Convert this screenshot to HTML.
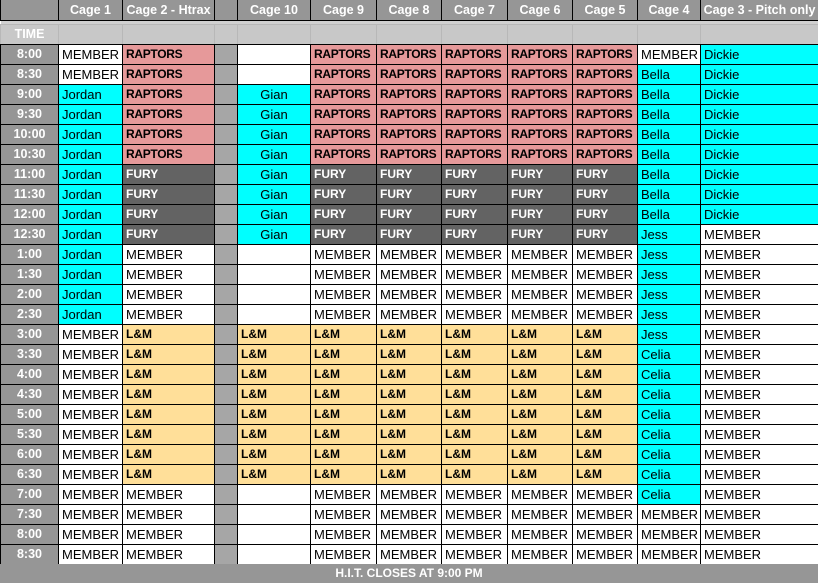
<!DOCTYPE html>
<html><head><meta charset="utf-8"><style>
body{margin:0;width:818px;height:583px;overflow:hidden;background:#fff;font-family:"Liberation Sans",Arial,sans-serif}
table{border-collapse:collapse;table-layout:fixed;width:818px;position:absolute;left:0;top:0}
td{border:1px solid #000;padding:0 0 0 3px;height:19px;font-size:13px;white-space:nowrap;overflow:hidden;line-height:19px;color:#000}
tr.h td{background:#969696;color:#fff;font-weight:bold;text-align:center;height:20px;padding:0;border-top:none;font-size:12.5px}
tr.sp td{height:3px;background:#d0d0d0;border:none;padding:0;line-height:3px}
tr.tm td{background:#c8c8c8;border-color:#b8b8b8;border-bottom:1px solid #000}
td.t{background:#969696;color:#fff;font-weight:bold;text-align:center;padding:0;font-size:12.5px}
.g{background:#a6a6a6}
.p{background:#e6999a;font-weight:bold;font-size:12px;letter-spacing:-0.3px}
.c{background:#00ffff}
.d{background:#636363;color:#fff;font-weight:bold;font-size:12px}
.o{background:#ffdf99;font-weight:bold;font-size:12px}
.m{text-align:center;padding:0}
.f{position:absolute;left:0;top:564px;width:818px;height:19px;background:#969696;color:#fff;font-weight:bold;font-size:12px;text-align:center;line-height:19px}
</style></head><body>
<table>
<colgroup><col style="width:58px"><col style="width:64px"><col style="width:92px"><col style="width:23px"><col style="width:73px"><col style="width:66px"><col style="width:65px"><col style="width:66px"><col style="width:65px"><col style="width:65px"><col style="width:63px"><col style="width:118px"></colgroup>
<tr class="h"><td></td><td>Cage 1</td><td>Cage 2 - Htrax</td><td></td><td>Cage 10</td><td>Cage 9</td><td>Cage 8</td><td>Cage 7</td><td>Cage 6</td><td>Cage 5</td><td>Cage 4</td><td>Cage 3 - Pitch only</td></tr>
<tr class="sp"><td></td><td></td><td></td><td></td><td></td><td></td><td></td><td></td><td></td><td></td><td></td><td></td></tr>
<tr class="tm"><td class="t">TIME</td><td></td><td></td><td></td><td></td><td></td><td></td><td></td><td></td><td></td><td></td><td></td></tr>
<tr><td class="t">8:00</td><td>MEMBER</td><td class="p">RAPTORS</td><td class="g"></td><td></td><td class="p">RAPTORS</td><td class="p">RAPTORS</td><td class="p">RAPTORS</td><td class="p">RAPTORS</td><td class="p">RAPTORS</td><td>MEMBER</td><td class="c">Dickie</td></tr>
<tr><td class="t">8:30</td><td>MEMBER</td><td class="p">RAPTORS</td><td class="g"></td><td></td><td class="p">RAPTORS</td><td class="p">RAPTORS</td><td class="p">RAPTORS</td><td class="p">RAPTORS</td><td class="p">RAPTORS</td><td class="c">Bella</td><td class="c">Dickie</td></tr>
<tr><td class="t">9:00</td><td class="c">Jordan</td><td class="p">RAPTORS</td><td class="g"></td><td class="c m">Gian</td><td class="p">RAPTORS</td><td class="p">RAPTORS</td><td class="p">RAPTORS</td><td class="p">RAPTORS</td><td class="p">RAPTORS</td><td class="c">Bella</td><td class="c">Dickie</td></tr>
<tr><td class="t">9:30</td><td class="c">Jordan</td><td class="p">RAPTORS</td><td class="g"></td><td class="c m">Gian</td><td class="p">RAPTORS</td><td class="p">RAPTORS</td><td class="p">RAPTORS</td><td class="p">RAPTORS</td><td class="p">RAPTORS</td><td class="c">Bella</td><td class="c">Dickie</td></tr>
<tr><td class="t">10:00</td><td class="c">Jordan</td><td class="p">RAPTORS</td><td class="g"></td><td class="c m">Gian</td><td class="p">RAPTORS</td><td class="p">RAPTORS</td><td class="p">RAPTORS</td><td class="p">RAPTORS</td><td class="p">RAPTORS</td><td class="c">Bella</td><td class="c">Dickie</td></tr>
<tr><td class="t">10:30</td><td class="c">Jordan</td><td class="p">RAPTORS</td><td class="g"></td><td class="c m">Gian</td><td class="p">RAPTORS</td><td class="p">RAPTORS</td><td class="p">RAPTORS</td><td class="p">RAPTORS</td><td class="p">RAPTORS</td><td class="c">Bella</td><td class="c">Dickie</td></tr>
<tr><td class="t">11:00</td><td class="c">Jordan</td><td class="d">FURY</td><td class="g"></td><td class="c m">Gian</td><td class="d">FURY</td><td class="d">FURY</td><td class="d">FURY</td><td class="d">FURY</td><td class="d">FURY</td><td class="c">Bella</td><td class="c">Dickie</td></tr>
<tr><td class="t">11:30</td><td class="c">Jordan</td><td class="d">FURY</td><td class="g"></td><td class="c m">Gian</td><td class="d">FURY</td><td class="d">FURY</td><td class="d">FURY</td><td class="d">FURY</td><td class="d">FURY</td><td class="c">Bella</td><td class="c">Dickie</td></tr>
<tr><td class="t">12:00</td><td class="c">Jordan</td><td class="d">FURY</td><td class="g"></td><td class="c m">Gian</td><td class="d">FURY</td><td class="d">FURY</td><td class="d">FURY</td><td class="d">FURY</td><td class="d">FURY</td><td class="c">Bella</td><td class="c">Dickie</td></tr>
<tr><td class="t">12:30</td><td class="c">Jordan</td><td class="d">FURY</td><td class="g"></td><td class="c m">Gian</td><td class="d">FURY</td><td class="d">FURY</td><td class="d">FURY</td><td class="d">FURY</td><td class="d">FURY</td><td class="c">Jess</td><td>MEMBER</td></tr>
<tr><td class="t">1:00</td><td class="c">Jordan</td><td>MEMBER</td><td class="g"></td><td></td><td>MEMBER</td><td>MEMBER</td><td>MEMBER</td><td>MEMBER</td><td>MEMBER</td><td class="c">Jess</td><td>MEMBER</td></tr>
<tr><td class="t">1:30</td><td class="c">Jordan</td><td>MEMBER</td><td class="g"></td><td></td><td>MEMBER</td><td>MEMBER</td><td>MEMBER</td><td>MEMBER</td><td>MEMBER</td><td class="c">Jess</td><td>MEMBER</td></tr>
<tr><td class="t">2:00</td><td class="c">Jordan</td><td>MEMBER</td><td class="g"></td><td></td><td>MEMBER</td><td>MEMBER</td><td>MEMBER</td><td>MEMBER</td><td>MEMBER</td><td class="c">Jess</td><td>MEMBER</td></tr>
<tr><td class="t">2:30</td><td class="c">Jordan</td><td>MEMBER</td><td class="g"></td><td></td><td>MEMBER</td><td>MEMBER</td><td>MEMBER</td><td>MEMBER</td><td>MEMBER</td><td class="c">Jess</td><td>MEMBER</td></tr>
<tr><td class="t">3:00</td><td>MEMBER</td><td class="o">L&amp;M</td><td class="g"></td><td class="o">L&amp;M</td><td class="o">L&amp;M</td><td class="o">L&amp;M</td><td class="o">L&amp;M</td><td class="o">L&amp;M</td><td class="o">L&amp;M</td><td class="c">Jess</td><td>MEMBER</td></tr>
<tr><td class="t">3:30</td><td>MEMBER</td><td class="o">L&amp;M</td><td class="g"></td><td class="o">L&amp;M</td><td class="o">L&amp;M</td><td class="o">L&amp;M</td><td class="o">L&amp;M</td><td class="o">L&amp;M</td><td class="o">L&amp;M</td><td class="c">Celia</td><td>MEMBER</td></tr>
<tr><td class="t">4:00</td><td>MEMBER</td><td class="o">L&amp;M</td><td class="g"></td><td class="o">L&amp;M</td><td class="o">L&amp;M</td><td class="o">L&amp;M</td><td class="o">L&amp;M</td><td class="o">L&amp;M</td><td class="o">L&amp;M</td><td class="c">Celia</td><td>MEMBER</td></tr>
<tr><td class="t">4:30</td><td>MEMBER</td><td class="o">L&amp;M</td><td class="g"></td><td class="o">L&amp;M</td><td class="o">L&amp;M</td><td class="o">L&amp;M</td><td class="o">L&amp;M</td><td class="o">L&amp;M</td><td class="o">L&amp;M</td><td class="c">Celia</td><td>MEMBER</td></tr>
<tr><td class="t">5:00</td><td>MEMBER</td><td class="o">L&amp;M</td><td class="g"></td><td class="o">L&amp;M</td><td class="o">L&amp;M</td><td class="o">L&amp;M</td><td class="o">L&amp;M</td><td class="o">L&amp;M</td><td class="o">L&amp;M</td><td class="c">Celia</td><td>MEMBER</td></tr>
<tr><td class="t">5:30</td><td>MEMBER</td><td class="o">L&amp;M</td><td class="g"></td><td class="o">L&amp;M</td><td class="o">L&amp;M</td><td class="o">L&amp;M</td><td class="o">L&amp;M</td><td class="o">L&amp;M</td><td class="o">L&amp;M</td><td class="c">Celia</td><td>MEMBER</td></tr>
<tr><td class="t">6:00</td><td>MEMBER</td><td class="o">L&amp;M</td><td class="g"></td><td class="o">L&amp;M</td><td class="o">L&amp;M</td><td class="o">L&amp;M</td><td class="o">L&amp;M</td><td class="o">L&amp;M</td><td class="o">L&amp;M</td><td class="c">Celia</td><td>MEMBER</td></tr>
<tr><td class="t">6:30</td><td>MEMBER</td><td class="o">L&amp;M</td><td class="g"></td><td class="o">L&amp;M</td><td class="o">L&amp;M</td><td class="o">L&amp;M</td><td class="o">L&amp;M</td><td class="o">L&amp;M</td><td class="o">L&amp;M</td><td class="c">Celia</td><td>MEMBER</td></tr>
<tr><td class="t">7:00</td><td>MEMBER</td><td>MEMBER</td><td class="g"></td><td></td><td>MEMBER</td><td>MEMBER</td><td>MEMBER</td><td>MEMBER</td><td>MEMBER</td><td class="c">Celia</td><td>MEMBER</td></tr>
<tr><td class="t">7:30</td><td>MEMBER</td><td>MEMBER</td><td class="g"></td><td></td><td>MEMBER</td><td>MEMBER</td><td>MEMBER</td><td>MEMBER</td><td>MEMBER</td><td>MEMBER</td><td>MEMBER</td></tr>
<tr><td class="t">8:00</td><td>MEMBER</td><td>MEMBER</td><td class="g"></td><td></td><td>MEMBER</td><td>MEMBER</td><td>MEMBER</td><td>MEMBER</td><td>MEMBER</td><td>MEMBER</td><td>MEMBER</td></tr>
<tr><td class="t">8:30</td><td>MEMBER</td><td>MEMBER</td><td class="g"></td><td></td><td>MEMBER</td><td>MEMBER</td><td>MEMBER</td><td>MEMBER</td><td>MEMBER</td><td>MEMBER</td><td>MEMBER</td></tr>
</table>
<div class="f">H.I.T. CLOSES AT 9:00 PM</div>
</body></html>
